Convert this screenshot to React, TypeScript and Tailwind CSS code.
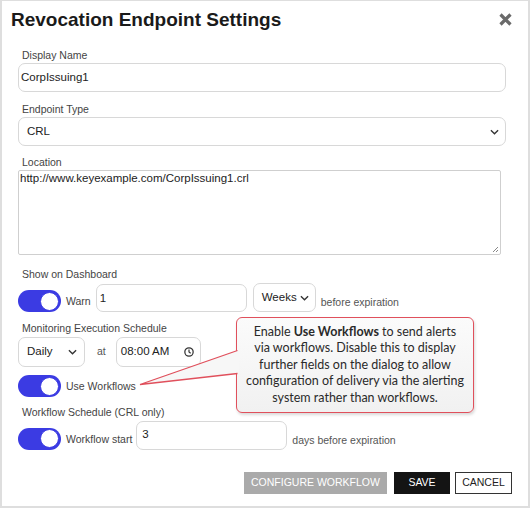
import React from "react";

function Toggle() {
  return (
    <div className="w-[43px] h-[22px] rounded-full bg-[#3b3be3] flex items-center justify-end pr-[2px] shrink-0">
      <div className="w-[19px] h-[19px] rounded-full bg-white border border-[#3b3be3]" />
    </div>
  );
}

function Chevron() {
  return (
    <svg width="9" height="6" viewBox="0 0 10 6" className="shrink-0">
      <path d="M1 1l4 4 4-4" fill="none" stroke="#333" strokeWidth="1.5" />
    </svg>
  );
}

function Label({ children }: { children: React.ReactNode }) {
  return <div className="text-[10.5px] leading-[14px] text-[#444] pl-1">{children}</div>;
}

export default function App() {
  return (
    <div className="relative w-[530px] h-[508px] bg-white border-2 border-t border-[#dedede] font-['Liberation_Sans',Arial,sans-serif] text-[#222]">
      <div className="flex justify-between items-start pt-[7px] pl-[9px] pr-[16px]">
        <h1 className="text-[19px] leading-[24px] font-bold text-[#1a1a1a]">Revocation Endpoint Settings</h1>
        <svg width="13" height="13" viewBox="0 0 13 13" className="mt-[5px]">
          <path d="M1.5 1.5l10 10M11.5 1.5l-10 10" stroke="#6a6a6a" strokeWidth="3.2" />
        </svg>
      </div>

      <div className="pl-[16px] pr-[22px] mt-[16px]">
        <Label>Display Name</Label>
        <div className="mt-px h-[29px] border border-[#d8d8d8] rounded-[7px] flex items-center px-[2px] text-[11.5px]">
          CorpIssuing1
        </div>

        <div className="mt-[10px]">
          <Label>Endpoint Type</Label>
        </div>
        <div className="mt-px h-[29px] border border-[#d8d8d8] rounded-[7px] flex items-center justify-between pl-[8px] pr-[6px] text-[11.5px]">
          <span>CRL</span>
          <Chevron />
        </div>

        <div className="mt-[9px]">
          <Label>Location</Label>
        </div>
        <div className="relative mt-px w-[483px] h-[85px] border border-[#cfcfcf] rounded-[2px] px-[1px] text-[11.5px] leading-[15px]">
          http://www.keyexample.com/CorpIssuing1.crl
          <svg width="7" height="7" viewBox="0 0 7 7" className="absolute right-[1px] bottom-[1px]">
            <path d="M6 1L1 6M6 4L4 6" stroke="#888" strokeWidth="1" />
          </svg>
        </div>

        <div className="mt-[12px]">
          <Label>Show on Dashboard</Label>
        </div>
        <div className="mt-[2px] flex items-end h-[29px]">
          <div className="self-center mt-[7px]">
            <Toggle />
          </div>
          <span className="ml-[5px] mb-[2px] text-[10.5px] text-[#444]">Warn</span>
          <div className="ml-[5px] w-[151px] h-[28px] border border-[#d8d8d8] rounded-[7px] px-[3px] pt-[6px] text-[11.5px] leading-[14px]">
            1
          </div>
          <div className="ml-[6px] w-[63px] h-[29px] border border-[#d8d8d8] rounded-[7px] flex items-center justify-between pl-[8px] pr-[6px] text-[11.5px]">
            <span>Weeks</span>
            <Chevron />
          </div>
          <span className="ml-[5px] mb-[1px] text-[10.5px] text-[#555]">before expiration</span>
        </div>

        <div className="mt-[9px]">
          <Label>Monitoring Execution Schedule</Label>
        </div>
        <div className="mt-[2px] flex items-center h-[30px]">
          <div className="w-[67px] h-[30px] border border-[#d8d8d8] rounded-[7px] flex items-center justify-between pl-[8px] pr-[7px] text-[11.5px]">
            <span>Daily</span>
            <Chevron />
          </div>
          <span className="ml-[12px] text-[10.5px] text-[#555]">at</span>
          <div className="ml-[10px] w-[85px] h-[30px] border border-[#d8d8d8] rounded-[7px] flex items-center justify-between pl-[4px] pr-[6px] text-[11.5px]">
            <span>08:00 AM</span>
            <svg width="10" height="10" viewBox="0 0 12 12">
              <circle cx="6" cy="6" r="5" fill="none" stroke="#333" strokeWidth="1.5" />
              <path d="M6 3v3l2 1.5" fill="none" stroke="#333" strokeWidth="1.4" />
            </svg>
          </div>
        </div>

        <div className="mt-[8px] flex items-center h-[22px]">
          <Toggle />
          <span className="ml-[5px] mt-[2px] text-[10.5px] text-[#444]">Use Workflows</span>
        </div>

        <div className="mt-[8px]">
          <Label>Workflow Schedule (CRL only)</Label>
        </div>
        <div className="mt-[2px] flex items-end h-[29px]">
          <div className="self-center mt-[6px]">
            <Toggle />
          </div>
          <span className="ml-[5px] mb-[2px] text-[10.5px] text-[#444]">Workflow start</span>
          <div className="ml-[4px] w-[151px] h-[29px] border border-[#d8d8d8] rounded-[7px] px-[5px] pt-[5px] text-[11.5px] leading-[14px]">
            3
          </div>
          <span className="ml-[5px] mb-[1px] text-[10.5px] text-[#555]">days before expiration</span>
        </div>

        <div className="mt-[22px] flex justify-end mr-[-6px] text-[10.5px]">
          <button className="h-[22px] w-[143px] bg-[#aaaaaa] text-white">CONFIGURE WORKFLOW</button>
          <button className="ml-[7px] h-[22px] w-[56px] bg-[#141414] text-white">SAVE</button>
          <button className="ml-[5px] h-[22px] w-[57px] border border-[#333] bg-white text-[#222]">CANCEL</button>
        </div>
      </div>

      <div className="absolute left-[234px] top-[316px] w-[238px] h-[96px] rounded-[6px] border-[1.5px] border-[#e0505c] bg-gradient-to-b from-[#fbfbfb] to-[#f1f1f1] shadow-[1px_2px_3px_rgba(0,0,0,0.15)] flex items-center justify-center text-center font-['Lato',sans-serif] text-[12.5px] leading-[16.5px] text-[#2a2a2a]">
        <p>
          Enable <b>Use Workflows</b> to send alerts
          <br />
          via workflows. Disable this to display
          <br />
          further fields on the dialog to allow
          <br />
          configuration of delivery via the alerting
          <br />
          system rather than workflows.
        </p>
      </div>
      <svg className="absolute left-0 top-0 pointer-events-none" width="530" height="508">
        <polygon points="237,349 138,383 237,372" fill="#f7f7f7" />
        <path d="M235.5 349.5L138 383.5L235.5 372.5" fill="none" stroke="#e0505c" strokeWidth="1.3" />
      </svg>
    </div>
  );
}
